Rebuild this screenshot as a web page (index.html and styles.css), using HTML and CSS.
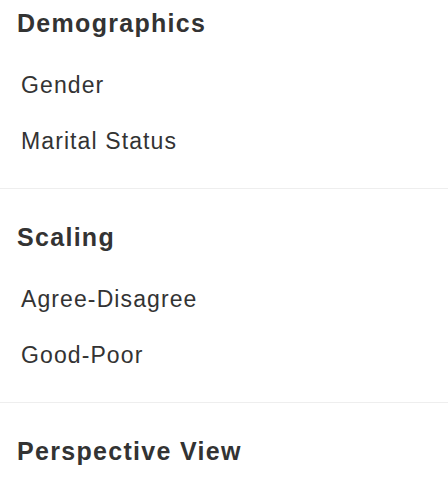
FILE: index.html
```html
<html>
    <head>
        <link rel="stylesheet" href="styles.css">
    </head>
    <body>
        <div class="section first">
            <h3 class="title">Demographics</h3>
            <ul class="items">
                <li class="item">Gender</li>
                <li class="item">Marital Status</li>
            </ul>
        </div>
        <div class="section">
            <h3 class="title">Scaling</h3>
            <ul class="items">
                <li class="item">Agree-Disagree</li>
                <li class="item">Good-Poor</li>
            </ul>
        </div>
        <div class="section">
            <h3 class="title">Perspective View</h3>
        </div>
    </body>
</html>
```
FILE: styles.css
```css
html{
    background-color: white;
    color: #333333;
    font-family: "Liberation Sans", Arial, sans-serif;
}
body{
    margin: 0;
}
.section{
    border-top: 1px solid #eeeeee;
    padding: 32px 16px 19px 17px;
}
.section.first{
    border-top: none;
    padding-top: 7px;
}
.title{
    margin: 0;
    font-size: 25px;
    line-height: 32px;
    font-weight: bold;
    letter-spacing: 1.3px;
}
.items{
    list-style: none;
    margin: 18px 0 0 0;
    padding: 0 0 0 4px;
}
.item{
    font-size: 23px;
    line-height: 56px;
    letter-spacing: 1.1px;
}
```
